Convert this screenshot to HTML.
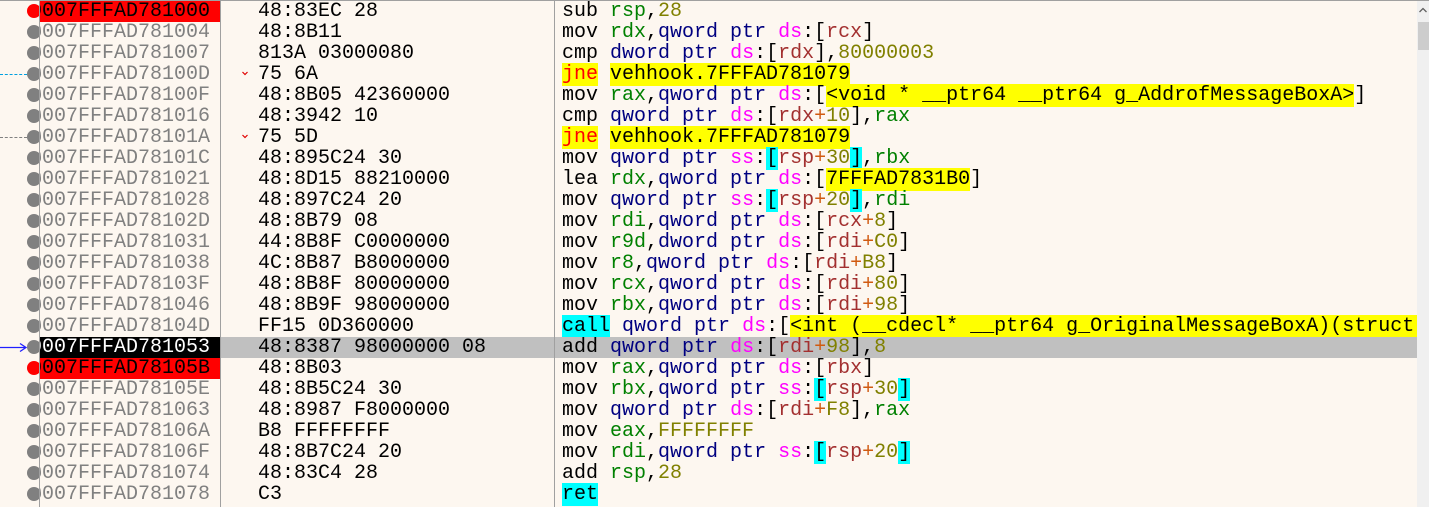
<!DOCTYPE html>
<html><head><meta charset="utf-8"><style>
html,body{margin:0;padding:0;}
body{width:1429px;height:507px;background:#fdf7f0;position:relative;overflow:hidden;font-family:"Liberation Mono",monospace;font-size:20px;}
.row{position:absolute;left:0;width:1417px;height:21px;line-height:21px;white-space:pre;}
.addr{position:absolute;left:40px;width:180px;height:21px;overflow:hidden;color:#808080;}
.addr span{position:absolute;left:-22px;}
.bytes{position:absolute;left:258px;color:#000;}
.ins{position:absolute;left:562px;color:#000;}
.dot{position:absolute;left:27px;top:3px;width:14px;height:14px;border-radius:50%;background:#808080;}
.vl{position:absolute;top:0;width:1px;height:507px;background:#a0a0a0;}
.r{color:#008000}.m{color:#a33030}.n{color:#808000}.p{color:#000080}.s{color:#ff00ff}.o{color:#d05a10}
.y{background:#ffff00}.c{background:#00ffff}.j{color:#ff0000;background:#ffff00}
.chev{position:absolute;left:242px;top:7px;}
</style></head><body>
<div style="position:absolute;left:0;top:0;width:1429px;height:1px;background:#a0a0a0"></div>

<div class="row" style="top:1px"><div class="dot" style="background:#ff0000"></div><div class="addr" style="background:#ff0000;color:#000"><span>00007FFFAD781000</span></div><div class="bytes">48:83EC 28</div><div class="ins">sub <span class="r">rsp</span>,<span class="n">28</span></div></div>
<div class="row" style="top:22px"><div class="dot"></div><div class="addr"><span>00007FFFAD781004</span></div><div class="bytes">48:8B11</div><div class="ins">mov <span class="r">rdx</span>,<span class="p">qword ptr</span> <span class="s">ds</span>:[<span class="m">rcx</span>]</div></div>
<div class="row" style="top:43px"><div class="dot"></div><div class="addr"><span>00007FFFAD781007</span></div><div class="bytes">813A 03000080</div><div class="ins">cmp <span class="p">dword ptr</span> <span class="s">ds</span>:[<span class="m">rdx</span>],<span class="n">80000003</span></div></div>
<div class="row" style="top:64px"><div style="position:absolute;left:0;top:10px;width:27px;border-top:1px dashed #00a0e0"></div><div class="dot"></div><div class="addr"><span>00007FFFAD78100D</span></div><svg class="chev" width="6" height="5"><path d="M0.5 1 L3 3.5 L5.5 1" stroke="#e00000" fill="none" stroke-width="1.2"/></svg><div class="bytes">75 6A</div><div class="ins"><span class="j">jne</span> <span class="y">vehhook.7FFFAD781079</span></div></div>
<div class="row" style="top:85px"><div class="dot"></div><div class="addr"><span>00007FFFAD78100F</span></div><div class="bytes">48:8B05 42360000</div><div class="ins">mov <span class="r">rax</span>,<span class="p">qword ptr</span> <span class="s">ds</span>:[<span class="y">&lt;void * __ptr64 __ptr64 g_AddrofMessageBoxA&gt;</span>]</div></div>
<div class="row" style="top:106px"><div class="dot"></div><div class="addr"><span>00007FFFAD781016</span></div><div class="bytes">48:3942 10</div><div class="ins">cmp <span class="p">qword ptr</span> <span class="s">ds</span>:[<span class="m">rdx</span><span class="o">+</span><span class="n">10</span>],<span class="r">rax</span></div></div>
<div class="row" style="top:127px"><div style="position:absolute;left:0;top:10px;width:27px;border-top:1px dashed #808080"></div><div class="dot"></div><div class="addr"><span>00007FFFAD78101A</span></div><svg class="chev" width="6" height="5"><path d="M0.5 1 L3 3.5 L5.5 1" stroke="#e00000" fill="none" stroke-width="1.2"/></svg><div class="bytes">75 5D</div><div class="ins"><span class="j">jne</span> <span class="y">vehhook.7FFFAD781079</span></div></div>
<div class="row" style="top:148px"><div class="dot"></div><div class="addr"><span>00007FFFAD78101C</span></div><div class="bytes">48:895C24 30</div><div class="ins">mov <span class="p">qword ptr</span> <span class="s">ss</span>:<span class="c">[</span><span class="m">rsp</span><span class="o">+</span><span class="n">30</span><span class="c">]</span>,<span class="r">rbx</span></div></div>
<div class="row" style="top:169px"><div class="dot"></div><div class="addr"><span>00007FFFAD781021</span></div><div class="bytes">48:8D15 88210000</div><div class="ins">lea <span class="r">rdx</span>,<span class="p">qword ptr</span> <span class="s">ds</span>:[<span class="y">7FFFAD7831B0</span>]</div></div>
<div class="row" style="top:190px"><div class="dot"></div><div class="addr"><span>00007FFFAD781028</span></div><div class="bytes">48:897C24 20</div><div class="ins">mov <span class="p">qword ptr</span> <span class="s">ss</span>:<span class="c">[</span><span class="m">rsp</span><span class="o">+</span><span class="n">20</span><span class="c">]</span>,<span class="r">rdi</span></div></div>
<div class="row" style="top:211px"><div class="dot"></div><div class="addr"><span>00007FFFAD78102D</span></div><div class="bytes">48:8B79 08</div><div class="ins">mov <span class="r">rdi</span>,<span class="p">qword ptr</span> <span class="s">ds</span>:[<span class="m">rcx</span><span class="o">+</span><span class="n">8</span>]</div></div>
<div class="row" style="top:232px"><div class="dot"></div><div class="addr"><span>00007FFFAD781031</span></div><div class="bytes">44:8B8F C0000000</div><div class="ins">mov <span class="r">r9d</span>,<span class="p">dword ptr</span> <span class="s">ds</span>:[<span class="m">rdi</span><span class="o">+</span><span class="n">C0</span>]</div></div>
<div class="row" style="top:253px"><div class="dot"></div><div class="addr"><span>00007FFFAD781038</span></div><div class="bytes">4C:8B87 B8000000</div><div class="ins">mov <span class="r">r8</span>,<span class="p">qword ptr</span> <span class="s">ds</span>:[<span class="m">rdi</span><span class="o">+</span><span class="n">B8</span>]</div></div>
<div class="row" style="top:274px"><div class="dot"></div><div class="addr"><span>00007FFFAD78103F</span></div><div class="bytes">48:8B8F 80000000</div><div class="ins">mov <span class="r">rcx</span>,<span class="p">qword ptr</span> <span class="s">ds</span>:[<span class="m">rdi</span><span class="o">+</span><span class="n">80</span>]</div></div>
<div class="row" style="top:295px"><div class="dot"></div><div class="addr"><span>00007FFFAD781046</span></div><div class="bytes">48:8B9F 98000000</div><div class="ins">mov <span class="r">rbx</span>,<span class="p">qword ptr</span> <span class="s">ds</span>:[<span class="m">rdi</span><span class="o">+</span><span class="n">98</span>]</div></div>
<div class="row" style="top:316px"><div class="dot"></div><div class="addr"><span>00007FFFAD78104D</span></div><div class="bytes">FF15 0D360000</div><div class="ins"><span class="c">call</span> <span class="p">qword ptr</span> <span class="s">ds</span>:[<span class="y">&lt;int (__cdecl* __ptr64 g_OriginalMessageBoxA)(struct </span></div></div>
<div class="row" style="top:337px"><div style="position:absolute;left:220px;top:0;width:1197px;height:21px;background:#c0c0c0"></div><svg style="position:absolute;left:0;top:5px" width="28" height="11"><path d="M0 5.5 H26 M20 1.5 L26 5.5 L20 9.5" stroke="#2020ff" stroke-width="1.3" fill="none"/></svg><div class="dot"></div><div class="addr" style="background:#000;color:#fff"><span>00007FFFAD781053</span></div><div class="bytes">48:8387 98000000 08</div><div class="ins">add <span class="p">qword ptr</span> <span class="s">ds</span>:[<span class="m">rdi</span><span class="o">+</span><span class="n">98</span>],<span class="n">8</span></div></div>
<div class="row" style="top:358px"><div class="dot" style="background:#ff0000"></div><div class="addr" style="background:#ff0000;color:#000"><span>00007FFFAD78105B</span></div><div class="bytes">48:8B03</div><div class="ins">mov <span class="r">rax</span>,<span class="p">qword ptr</span> <span class="s">ds</span>:[<span class="m">rbx</span>]</div></div>
<div class="row" style="top:379px"><div class="dot"></div><div class="addr"><span>00007FFFAD78105E</span></div><div class="bytes">48:8B5C24 30</div><div class="ins">mov <span class="r">rbx</span>,<span class="p">qword ptr</span> <span class="s">ss</span>:<span class="c">[</span><span class="m">rsp</span><span class="o">+</span><span class="n">30</span><span class="c">]</span></div></div>
<div class="row" style="top:400px"><div class="dot"></div><div class="addr"><span>00007FFFAD781063</span></div><div class="bytes">48:8987 F8000000</div><div class="ins">mov <span class="p">qword ptr</span> <span class="s">ds</span>:[<span class="m">rdi</span><span class="o">+</span><span class="n">F8</span>],<span class="r">rax</span></div></div>
<div class="row" style="top:421px"><div class="dot"></div><div class="addr"><span>00007FFFAD78106A</span></div><div class="bytes">B8 FFFFFFFF</div><div class="ins">mov <span class="r">eax</span>,<span class="n">FFFFFFFF</span></div></div>
<div class="row" style="top:442px"><div class="dot"></div><div class="addr"><span>00007FFFAD78106F</span></div><div class="bytes">48:8B7C24 20</div><div class="ins">mov <span class="r">rdi</span>,<span class="p">qword ptr</span> <span class="s">ss</span>:<span class="c">[</span><span class="m">rsp</span><span class="o">+</span><span class="n">20</span><span class="c">]</span></div></div>
<div class="row" style="top:463px"><div class="dot"></div><div class="addr"><span>00007FFFAD781074</span></div><div class="bytes">48:83C4 28</div><div class="ins">add <span class="r">rsp</span>,<span class="n">28</span></div></div>
<div class="row" style="top:484px"><div class="dot"></div><div class="addr"><span>00007FFFAD781078</span></div><div class="bytes">C3</div><div class="ins"><span class="c">ret</span></div></div>

<div class="vl" style="left:39px"></div>
<div class="vl" style="left:220px"></div>
<div class="vl" style="left:554px"></div>

<div style="position:absolute;left:1417px;top:1px;width:12px;height:506px;background:#f0f0f0"></div>
<svg style="position:absolute;left:1418px;top:6px" width="10" height="8"><path d="M1.5 6 L5 2.5 L8.5 6" stroke="#606060" stroke-width="1.3" fill="none"/></svg>
<div style="position:absolute;left:1418px;top:22px;width:11px;height:28px;background:#cdcdcd"></div>
</body></html>
